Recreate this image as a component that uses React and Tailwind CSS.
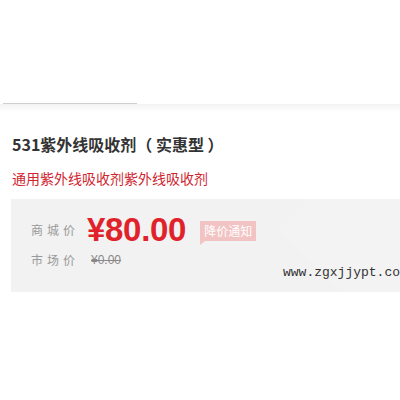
import React from 'react';

function PriceRow({ label, children, className }) {
  return (
    <div className={`flex items-center ${className || ''}`}>
      <span className="w-[56px] text-[12px] tracking-[4px] text-[#999]">{label}</span>
      {children}
    </div>
  );
}

export default function App() {
  return (
    <div
      className="w-[400px] h-[400px] bg-white overflow-hidden"
      style={{ fontFamily: '"Noto Sans CJK SC", "Liberation Sans", sans-serif' }}
    >
      <div className="h-[103px]" />
      <div className="flex">
        <div className="ml-[3px] w-[134px] h-[1px] bg-[#cfcfcf]" />
      </div>
      <div className="h-[8px] bg-gradient-to-b from-[#f3f3f3] to-white" />

      <div className="pl-[12px] pt-[21px]">
        <h1 className="text-[16px] leading-[22px] font-bold text-[#333]">531紫外线吸收剂（ 实惠型 ）</h1>
        <p className="mt-[14px] text-[14px] leading-[18px] text-[#d02530]">通用紫外线吸收剂紫外线吸收剂</p>
      </div>

      <div className="ml-[11px] mt-[12px] h-[93px] bg-[#f2f2f2] relative overflow-hidden">
        <div className="absolute right-[-70px] top-[-50px] w-[160px] h-[160px] rotate-45 bg-[#f3f3f3]" />
        <div className="relative pl-[20px] pt-[12px]">
          <PriceRow label="商城价">
            <span
              className="text-[33px] leading-[38px] font-bold text-[#e0232a] tracking-[-0.3px]"
              style={{ fontFamily: '"Liberation Sans", Arial, sans-serif' }}
            >
              ¥80.00
            </span>
            <span className="relative ml-[14px] mt-[2px] px-[4px] h-[20px] leading-[20px] text-[12px] text-white bg-[#f2c3c3]">
              降价通知
              <span className="absolute left-0 bottom-[-4px] w-0 h-0 border-t-[4px] border-t-[#f2c3c3] border-r-[5px] border-r-transparent" />
            </span>
          </PriceRow>
          <PriceRow label="市场价" className="mt-[2px]">
            <span
              className="ml-[4px] text-[12px] text-[#888] line-through"
              style={{ fontFamily: '"Liberation Sans", Arial, sans-serif' }}
            >
              ¥0.00
            </span>
          </PriceRow>
          <div className="flex -mt-[6px] ml-[252px]">
            <span
              className="text-[13px] text-[#333] whitespace-nowrap"
              style={{ fontFamily: '"Liberation Mono", "Courier New", monospace' }}
            >
              www.zgxjjypt.com
            </span>
          </div>
        </div>
      </div>
    </div>
  );
}
